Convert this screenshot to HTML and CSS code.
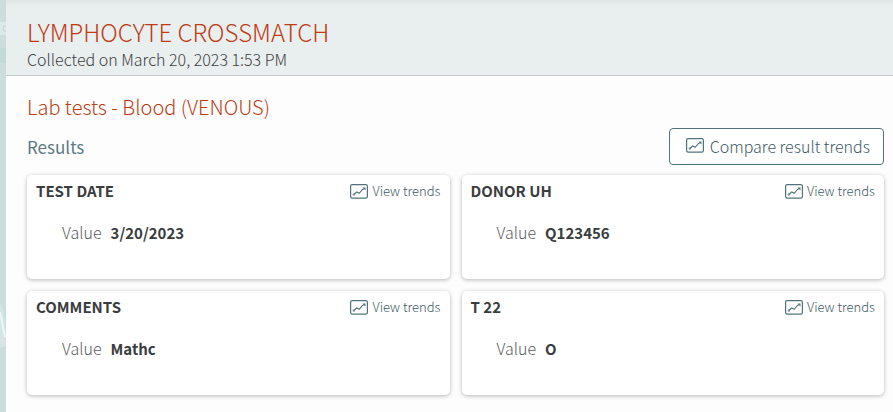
FILE: index.html
```html
<!DOCTYPE html>
<html lang="en">
<head>
<meta charset="utf-8">
<title>Lymphocyte Crossmatch</title>
<link rel="stylesheet" href="styles.css">
</head>
<body>
<svg class="symbols" aria-hidden="true">
  <symbol id="trend" viewBox="0 0 18 15">
    <rect x="0.6" y="0.6" width="16.8" height="13.6" rx="1.6" fill="none" stroke="currentColor" stroke-width="1.2"/>
    <path d="M3.800 10.500 6.800 8 9.200 9.300 12.500 5.500 14.500 4.500" fill="none" stroke="currentColor" stroke-width="1.1"/>
    <circle cx="3.800" cy="10.600" r="1.300" fill="currentColor" opacity=".6"/>
    <path d="M12.500 3.400h3v3z" fill="currentColor"/>
  </symbol>
</svg>
<div class="backdrop">
  <svg class="pattern" viewBox="0 0 6 412" aria-hidden="true">
    <path d="M0 22h6v13H0z" fill="#dbe9e7"/>
    <path d="M6 26H3.500v5H6" fill="none" stroke="#c5dad7"/>
    <path d="M0 48h6v15H0z" fill="#c2dad8"/>
    <path d="M0 304q6 6 6 42l-6 2z" fill="#d5e5e3"/>
    <path d="M0 312 5 337" fill="none" stroke="#eef6f5" stroke-width="2"/>
  </svg>
  <main class="sheet">
    <header class="header">
      <h1 class="title">LYMPHOCYTE CROSSMATCH</h1>
      <p class="collected">Collected on March 20, 2023 1:53 PM</p>
    </header>
    <section class="content">
      <h2 class="subtitle">Lab tests - Blood (VENOUS)</h2>
      <div class="toolbar">
        <h3 class="results">Results</h3>
        <button class="compare" type="button"><svg class="icon"><use href="#trend"/></svg>Compare result trends</button>
      </div>
      <div class="cards">
        <article class="card">
          <div class="card-head"><h4 class="name">TEST DATE</h4><a class="view" href="#"><svg class="icon"><use href="#trend"/></svg>View trends</a></div>
          <dl class="row"><dt class="label">Value</dt><dd class="value">3/20/2023</dd></dl>
        </article>
        <article class="card">
          <div class="card-head"><h4 class="name">DONOR UH</h4><a class="view" href="#"><svg class="icon"><use href="#trend"/></svg>View trends</a></div>
          <dl class="row"><dt class="label">Value</dt><dd class="value">Q123456</dd></dl>
        </article>
        <article class="card">
          <div class="card-head"><h4 class="name">COMMENTS</h4><a class="view" href="#"><svg class="icon"><use href="#trend"/></svg>View trends</a></div>
          <dl class="row"><dt class="label">Value</dt><dd class="value">Mathc</dd></dl>
        </article>
        <article class="card">
          <div class="card-head"><h4 class="name">T 22</h4><a class="view" href="#"><svg class="icon"><use href="#trend"/></svg>View trends</a></div>
          <dl class="row"><dt class="label">Value</dt><dd class="value">O</dd></dl>
        </article>
      </div>
    </section>
  </main>
</div>
</body>
</html>
```
FILE: styles.css
```css
* {
  box-sizing: border-box;
  margin: 0;
}

body {
  font-family: "Noto Sans CJK SC", "Noto Sans", sans-serif;
  font-size: 16px;
  font-weight: 300;
  line-height: 24px;
}

.symbols {
  position: absolute;
  width: 0;
  height: 0;
}

.backdrop {
  display: flex;
  min-height: 100vh;
  background: #cbdedc;
}

.pattern {
  flex: none;
  width: 6px;
  height: 412px;
}

.sheet {
  flex: 1;
  background: #fdfdfd;
}

.header {
  padding: 15px 21px 5px;
  border-bottom: 1px solid #c6c9ca;
  background: linear-gradient(#dfe5e5, #e9efef 6px);
}

.title {
  color: #bd3c13;
  font-size: 24px;
  font-weight: 300;
  line-height: 34px;
}

.collected {
  color: #3c4041;
  line-height: 21px;
}

.content {
  padding: 16px 9px 17px 21px;
}

.subtitle {
  color: #bd3c13;
  font-size: 20px;
  font-weight: 300;
  line-height: 30px;
}

.toolbar {
  display: flex;
  align-items: center;
  justify-content: space-between;
  margin: 6px 0 10px;
}

.results {
  color: #5b7a83;
  font-size: 17px;
  font-weight: 400;
}

.compare {
  display: flex;
  align-items: center;
  gap: 6px;
  height: 37px;
  padding: 0 13px 2px 16px;
  border: 1px solid #52727b;
  border-radius: 4px;
  background: #fff;
  color: #3b5a63;
  font: inherit;
}

.icon {
  flex: none;
  width: 18px;
  height: 15px;
  color: #52727b;
}

.cards {
  display: grid;
  grid-template-columns: 1fr 1fr;
  gap: 12px;
}

.card {
  min-height: 104px;
  padding: 4px 9px;
  border-radius: 5px;
  background: #fff;
  box-shadow: 0 1px 4px rgba(0, 0, 0, 0.28);
}

.card-head {
  display: flex;
  align-items: center;
  justify-content: space-between;
}

.name {
  color: #3a3d3e;
  font-size: 15px;
  font-weight: 700;
}

.view {
  display: flex;
  align-items: center;
  gap: 4px;
  color: #3b5a63;
  font-size: 13px;
  text-decoration: none;
}

.row {
  display: flex;
  align-items: baseline;
  gap: 9px;
  padding: 17px 0 0 26px;
}

.label {
  color: #5a5c5d;
}

.value {
  color: #3a3d3e;
  font-size: 15px;
  font-weight: 700;
}
```
